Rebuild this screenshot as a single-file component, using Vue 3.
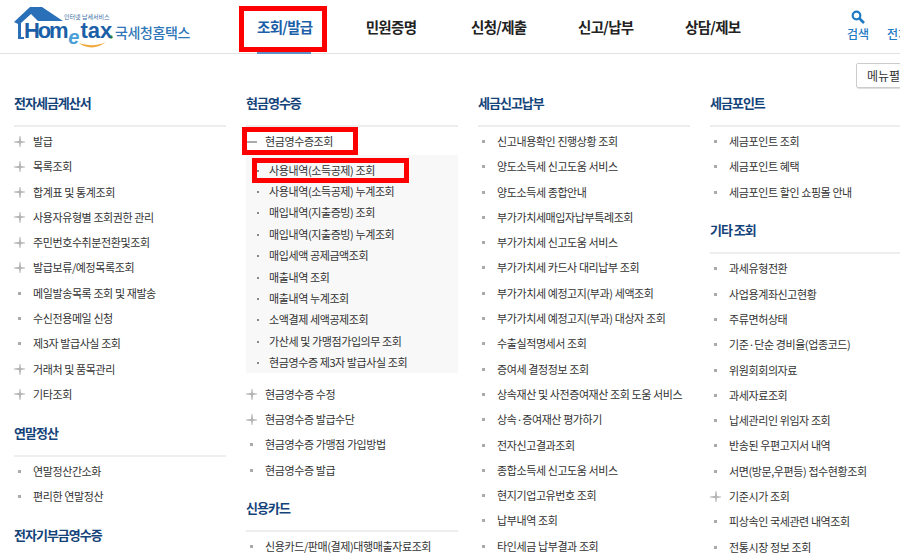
<script setup>
const navItems = ['조회/발급', '민원증명', '신청/제출', '신고/납부', '상담/제보'];

const columns = [
  {
    groups: [
      {
        title: '전자세금계산서',
        items: [
          { label: '발급', plus: true }, { label: '목록조회', plus: true }, { label: '합계표 및 통계조회', plus: true },
          { label: '사용자유형별 조회권한 관리', plus: true }, { label: '주민번호수취분전환및조회', plus: true },
          { label: '발급보류/예정목록조회', plus: true }, { label: '메일발송목록 조회 및 재발송' }, { label: '수신전용메일 신청' },
          { label: '제3자 발급사실 조회' }, { label: '거래처 및 품목관리', plus: true }, { label: '기타조회', plus: true },
        ],
      },
      { title: '연말정산', items: [{ label: '연말정산간소화' }, { label: '편리한 연말정산' }] },
      { title: '전자기부금영수증', items: [] },
    ],
  },
  {
    groups: [
      {
        title: '현금영수증',
        items: [
          {
            label: '현금영수증조회',
            open: true,
            children: [
              '사용내역(소득공제) 조회', '사용내역(소득공제) 누계조회', '매입내역(지출증빙) 조회', '매입내역(지출증빙) 누계조회',
              '매입세액 공제금액조회', '매출내역 조회', '매출내역 누계조회', '소액결제 세액공제조회',
              '가산세 및 가맹점가입의무 조회', '현금영수증 제3자 발급사실 조회',
            ],
          },
          { label: '현금영수증 수정', plus: true }, { label: '현금영수증 발급수단', plus: true },
          { label: '현금영수증 가맹점 가입방법' }, { label: '현금영수증 발급' },
        ],
      },
      { title: '신용카드', items: [{ label: '신용카드/판매(결제)대행매출자료조회' }] },
    ],
  },
  {
    groups: [
      {
        title: '세금신고납부',
        items: [
          '신고내용확인 진행상황 조회', '양도소득세 신고도움 서비스', '양도소득세 종합안내', '부가가치세매입자납부특례조회',
          '부가가치세 신고도움 서비스', '부가가치세 카드사 대리납부 조회', '부가가치세 예정고지(부과) 세액조회',
          '부가가치세 예정고지(부과) 대상자 조회', '수출실적명세서 조회', '증여세 결정정보 조회',
          '상속재산 및 사전증여재산 조회 도움 서비스', '상속·증여재산 평가하기', '전자신고결과조회', '종합소득세 신고도움 서비스',
          '현지기업고유번호 조회', '납부내역 조회', '타인세금 납부결과 조회',
        ].map((label) => ({ label })),
      },
    ],
  },
  {
    groups: [
      {
        title: '세금포인트',
        items: [{ label: '세금포인트 조회' }, { label: '세금포인트 혜택' }, { label: '세금포인트 할인 쇼핑몰 안내' }],
      },
      {
        title: '기타 조회',
        items: [
          { label: '과세유형전환' }, { label: '사업용계좌신고현황' }, { label: '주류면허상태' },
          { label: '기준·단순 경비율(업종코드)' }, { label: '위원회회의자료' }, { label: '과세자료조회' },
          { label: '납세관리인 위임자 조회' }, { label: '반송된 우편고지서 내역' }, { label: '서면(방문,우편등) 접수현황조회' },
          { label: '기준시가 조회', plus: true }, { label: '피상속인 국세관련 내역조회' }, { label: '전통시장 정보 조회' },
        ],
      },
    ],
  },
];
</script>

<template>
  <div class="page">
    <header class="header">
      <div class="logo">
        <svg class="logo-mark" width="120" height="50" viewBox="0 0 120 50">
          <path d="M14 22 L30 7 L42 7 L63 21 L38 21 L31 14 L21 23 L21 37 L24 37 L24 39 L18 39 L18 24 Z" fill="#2a70b8" />
          <path d="M79 43 C86 49 98 49 106 42 C98 46 88 46 79 43 Z" fill="#f2a93b" />
          <circle cx="111" cy="37" r="1.8" fill="#3f9e3a" />
        </svg>
        <span class="logo-small">인터넷 납세서비스</span>
        <span class="logo-home"><span class="logo-hom">Hom</span><em>e</em><span>tax</span></span>
        <span class="logo-name">국세청홈택스</span>
      </div>
      <nav class="nav">
        <a v-for="(item, i) in navItems" :key="item" class="nav-item" :class="{ active: i === 0 }">{{ item }}</a>
      </nav>
      <div class="tools">
        <a class="tool">
          <svg width="14" height="14" viewBox="0 0 14 14">
            <circle cx="5.5" cy="5.5" r="3.8" fill="none" stroke="#1f7ac4" stroke-width="2.2" />
            <path d="M8.5 8.5 L13 13" stroke="#1f7ac4" stroke-width="2.6" />
          </svg>
          <span>검색</span>
        </a>
        <a class="tool"><span class="tool-blank"></span><span>전체메뉴</span></a>
      </div>
    </header>

    <div class="toolbar"><button class="expand">메뉴펼치기</button></div>

    <main class="columns">
      <section v-for="(col, c) in columns" :key="c" class="column">
        <div v-for="group in col.groups" :key="group.title" class="group">
          <h2 class="group-title">{{ group.title }}</h2>
          <ul class="list">
            <li v-for="item in group.items" :key="item.label" class="item">
              <div class="row">
                <span v-if="item.open" class="mark-minus"></span>
                <span v-else-if="item.plus" class="mark-plus"></span>
                <span v-else class="mark-dot"></span>
                <span>{{ item.label }}</span>
                <span v-if="item.open" class="highlight"></span>
              </div>
              <ul v-if="item.children" class="sub">
                <li v-for="(child, k) in item.children" :key="child" class="sub-item">
                  <span class="sub-dot"></span>{{ child }}
                  <span v-if="k === 0" class="highlight-sub"></span>
                </li>
              </ul>
            </li>
          </ul>
        </div>
      </section>
    </main>
  </div>
</template>

<style>
html, body { margin: 0; overflow: hidden; background: #fff; }
</style>

<style scoped>
.page {
  width: 900px;
  height: 557px;
  overflow: hidden;
  font-family: "Noto Sans CJK KR", "Liberation Sans", sans-serif;
  color: #333;
}
.header {
  height: 53px;
  border-bottom: 1px solid #e2e2e2;
  display: flex;
  position: relative;
}
.logo { width: 240px; position: relative; flex: none; }
.logo-mark { position: absolute; left: 0; top: 0; }
.logo-small { position: absolute; left: 64px; top: 12px; font-size: 6px; line-height: 10px; color: #3a6ea5; white-space: nowrap; }
.logo-home {
  position: absolute; left: 24px; top: 22px; font: bold 22px/18px "Liberation Sans", sans-serif;
  color: #1c5fa8; white-space: nowrap;
}
.logo-hom { letter-spacing: -2.2px; }
.logo-home em { color: #4a9fd8; font-size: 20px; position: relative; top: 6px; margin: 0 1px 0 2px; }
.logo-name { position: absolute; left: 115px; top: 22px; font-size: 14px; line-height: 20px; font-weight: 500; color: #2f77b8; letter-spacing: -0.4px; white-space: nowrap; }
.nav { display: flex; gap: 53px; padding-left: 17px; flex: none; }
.nav-item {
  height: 53px; line-height: 54px; font-size: 14.5px; font-weight: 700; color: #222; letter-spacing: -0.7px;
  position: relative; width: 54px; text-align: center; white-space: nowrap;
}
.nav-item.active { color: #1c5fa8; }
.nav-item.active::before {
  content: ""; position: absolute; left: -18px; right: -16px; top: 6px; height: 46px; border: 5px solid #f00; box-sizing: border-box;
}
.nav-item.active::after {
  content: ""; position: absolute; left: 0; right: 0; bottom: -1px; height: 2px; background: #5e8fc7;
}
.tools { position: absolute; left: 847px; top: 10px; display: flex; gap: 18px; white-space: nowrap; }
.tool { display: flex; flex-direction: column; align-items: center; font-size: 12px; font-weight: 500; color: #1f7ac4; line-height: 17px; gap: 1px; }
.tool-blank { height: 14px; }
.tools .tool:last-child { align-items: flex-start; }

.toolbar { height: 42px; position: relative; }
.expand {
  position: absolute; left: 856px; top: 9px; width: 80px; height: 25px; padding: 0 0 0 10px; text-align: left;
  background: #fff; border: 1px solid #ccc; border-radius: 2px; font: 12px "Noto Sans CJK KR", sans-serif; color: #333;
  box-shadow: 1px 1px 1px #ddd;
}

.columns { display: flex; gap: 20px; padding-left: 14px; }
.column { width: 212px; flex: none; }
.group-title {
  margin: 0; height: 29px; line-height: 14px; font-size: 13px; font-weight: 700; color: #14437a;
  border-bottom: 2px solid #eee; letter-spacing: -1px;
}
.list { list-style: none; margin: 0 0 18.5px; padding: 2px 0 0; }
.item { font-size: 11px; letter-spacing: -0.4px; color: #333; }
.row { height: 25.3px; line-height: 25.3px; display: flex; align-items: center; position: relative; padding-left: 19px; white-space: nowrap; }
.mark-plus { position: absolute; left: 0; top: 7px; width: 11px; height: 11px;
  background: linear-gradient(90deg, #e0e0e0, #b4b4b4 40%, #b4b4b4 60%, #e0e0e0) center/11px 2px no-repeat,
    linear-gradient(#e0e0e0, #b4b4b4 40%, #b4b4b4 60%, #e0e0e0) center/2px 11px no-repeat; }
.mark-dot { position: absolute; left: 4px; top: 11px; width: 3px; height: 3px; background: #aaa; }
.mark-minus { position: absolute; left: 1px; top: 12px; width: 10px; height: 2px; background: #aaa; }
.highlight { position: absolute; left: -4px; top: -2px; width: 116px; height: 28px; border: 5px solid #f00; box-sizing: border-box; }
.sub { list-style: none; margin: 1px 0 8.5px; padding: 4.5px 0 0; background: #f8f8f8; }
.sub-item { height: 21.35px; line-height: 21.35px; padding-left: 23px; position: relative; white-space: nowrap; }
.sub-dot { position: absolute; left: 11px; top: 10px; width: 2px; height: 2px; background: #888; }
.highlight-sub { position: absolute; left: 6px; top: -2px; width: 157px; height: 25px; border: 5px solid #f00; box-sizing: border-box; }
</style>
